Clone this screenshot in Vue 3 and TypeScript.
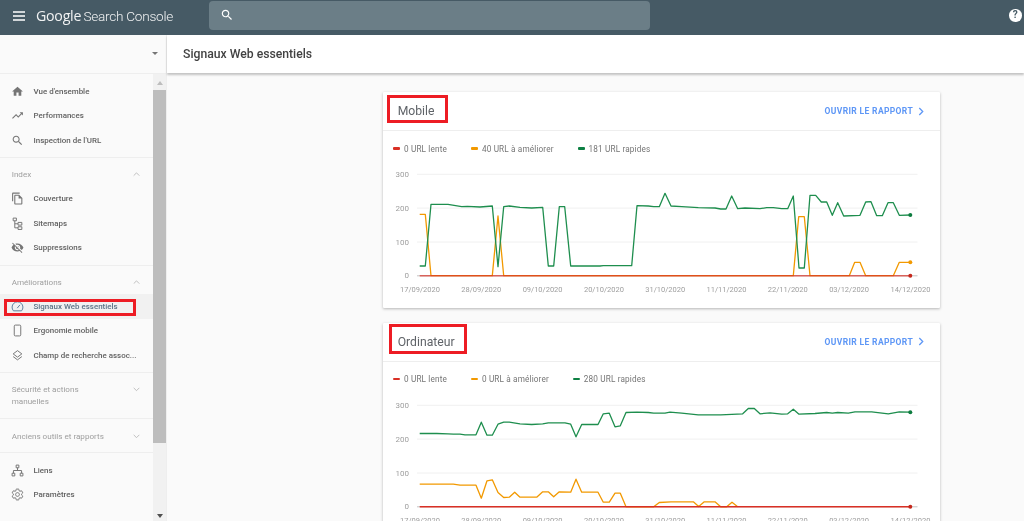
<script setup lang="ts">
type Icon = { d: string; stroke?: boolean };
type Row = { label: string; icon: Icon; active?: boolean };
type Pt = number[];

const icons: Record<string, Icon> = {
  home: { d: 'M10 20v-6h4v6h5v-8h3L12 3 2 12h3v8z' },
  trend: { d: 'M16 6l2.29 2.29-4.88 4.88-4-4L2 16.59 3.41 18l6-6 4 4 6.3-6.29L22 12V6z' },
  search: { d: 'M15.5 14h-.79l-.28-.27C15.41 12.59 16 11.11 16 9.5 16 5.91 13.09 3 9.5 3S3 5.91 3 9.5 5.91 16 9.5 16c1.61 0 3.09-.59 4.23-1.57l.27.28v.79l5 4.99L20.49 19l-4.99-5zm-6 0C7.01 14 5 11.99 5 9.5S7.01 5 9.5 5 14 7.01 14 9.5 11.99 14 9.5 14z' },
  copy: { d: 'M16 1H4c-1.1 0-2 .9-2 2v14h2V3h12V1zm-1 4H8c-1.1 0-1.99.9-1.99 2L6 21c0 1.1.89 2 1.99 2H19c1.1 0 2-.9 2-2V11l-6-6zM8 21V7h6v5h5v9H8z' },
  sitemap: { d: 'M4 2h6v5H4zM13 10h7v5h-7zM13 18h7v5h-7zM7 7v13h6M7 12.5h6', stroke: true },
  eyeOff: { d: 'M12 7c2.76 0 5 2.24 5 5 0 .65-.13 1.26-.36 1.83l2.92 2.92c1.51-1.26 2.7-2.89 3.43-4.75-1.73-4.39-6-7.5-11-7.5-1.4 0-2.74.25-3.98.7l2.16 2.16C10.74 7.13 11.35 7 12 7zM2 4.27l2.28 2.28.46.46C3.08 8.3 1.78 10.02 1 12c1.73 4.39 6 7.5 11 7.5 1.55 0 3.03-.3 4.38-.84l.42.42L19.73 22 21 20.73 3.27 3 2 4.27zM7.53 9.8l1.55 1.55c-.05.21-.08.43-.08.65 0 1.66 1.34 3 3 3 .22 0 .44-.03.65-.08l1.55 1.55c-.67.33-1.41.53-2.2.53-2.76 0-5-2.24-5-5 0-.79.2-1.53.53-2.2zm4.31-.78l3.15 3.15.02-.16c0-1.66-1.34-3-3-3l-.17.01z' },
  gauge: { d: 'M4.5 20a10 10 0 1 1 15 0zM11.5 15l5-6', stroke: true },
  phone: { d: 'M8 2h8a2 2 0 0 1 2 2v16a2 2 0 0 1-2 2H8a2 2 0 0 1-2-2V4a2 2 0 0 1 2-2z', stroke: true },
  layers: { d: 'M12 3l8 6-8 6-8-6zM4 14l8 6 8-6', stroke: true },
  network: { d: 'M9.5 2h5v5h-5zM2 17h5v5H2zM17 17h5v5h-5zM12 7v5M4.5 17v-5h15v5', stroke: true },
  gear: { d: 'M19.43 12.98c.04-.32.07-.64.07-.98s-.03-.66-.07-.98l2.11-1.65c.19-.15.24-.42.12-.64l-2-3.46c-.12-.22-.39-.3-.61-.22l-2.49 1c-.52-.4-1.08-.73-1.69-.98l-.38-2.65C14.46 2.18 14.25 2 14 2h-4c-.25 0-.46.18-.49.42l-.38 2.65c-.61.25-1.17.59-1.69.98l-2.49-1c-.23-.09-.49 0-.61.22l-2 3.46c-.13.22-.07.49.12.64l2.11 1.65c-.04.32-.07.65-.07.98s.03.66.07.98l-2.11 1.65c-.19.15-.24.42-.12.64l2 3.46c.12.22.39.3.61.22l2.49-1c.52.4 1.08.73 1.69.98l.38 2.65c.03.24.24.42.49.42h4c.25 0 .46-.18.49-.42l.38-2.65c.61-.25 1.17-.59 1.69-.98l2.49 1c.23.09.49 0 .61-.22l2-3.46c.12-.22.07-.49-.12-.64l-2.11-1.65zM12 15.5c-1.93 0-3.5-1.57-3.5-3.5s1.57-3.5 3.5-3.5 3.5 1.57 3.5 3.5-1.57 3.5-3.5 3.5z', stroke: true },
};

const overview: Row[] = [
  { label: "Vue d'ensemble", icon: icons.home },
  { label: 'Performances', icon: icons.trend },
  { label: "Inspection de l'URL", icon: icons.search },
];
const indexRows: Row[] = [
  { label: 'Couverture', icon: icons.copy },
  { label: 'Sitemaps', icon: icons.sitemap },
  { label: 'Suppressions', icon: icons.eyeOff },
];
const improveRows: Row[] = [
  { label: 'Signaux Web essentiels', icon: icons.gauge, active: true },
  { label: 'Ergonomie mobile', icon: icons.phone },
  { label: 'Champ de recherche assoc...', icon: icons.layers },
];
const footerRows: Row[] = [
  { label: 'Liens', icon: icons.network },
  { label: 'Paramètres', icon: icons.gear },
];
const groups = [
  { title: 'Index', open: true, rows: indexRows },
  { title: 'Améliorations', open: true, rows: improveRows },
];

const dates = ['17/09/2020', '28/09/2020', '09/10/2020', '20/10/2020', '31/10/2020', '11/11/2020', '22/11/2020', '03/12/2020', '14/12/2020'];
const ticks = [
  { label: '300', y: 9.3 },
  { label: '200', y: 43.1 },
  { label: '100', y: 77 },
  { label: '0', y: 110.8 },
];
const dateX = (i: number) => 37 + i * 61.3;

// Traced points: the first list runs over the left half of the chart, the second over the right half.
function line(left: Pt[], right: Pt[], originY: number): string {
  const a = left.map(([x, y]) => `${(x / 3 - 3).toFixed(1)},${(y / 3 + originY).toFixed(1)}`);
  const b = right.map(([x, y]) => `${(x / 3 + 277).toFixed(1)},${(y / 3 + originY).toFixed(1)}`);
  return [...a, ...b].join(' ');
}

const mobileOrigin = -75;
const desktopOrigin = -85.5;

const cards = [
  {
    title: 'Mobile',
    legend: [
      { text: '0 URL lente', cls: 'red' },
      { text: '40 URL à améliorer', cls: 'orange' },
      { text: '181 URL rapides', cls: 'green' },
    ],
    red: line([[119, 557]], [[751, 557]], mobileOrigin),
    orange: line(
      [[119, 373], [136, 373], [153, 557], [337, 557], [354, 378], [371, 557]],
      [[400, 557], [416, 380], [433, 380], [450, 557], [568, 557], [584, 517], [600, 517], [617, 557], [700, 557], [718, 517], [751, 517]],
      mobileOrigin,
    ),
    green: line(
      [[119, 528], [136, 528], [153, 343], [204, 343], [245, 350], [262, 349], [300, 351], [337, 348], [354, 530], [371, 350], [388, 348], [420, 352], [455, 354], [488, 352], [505, 528], [521, 528], [538, 350], [554, 350], [572, 528], [660, 528], [670, 527], [755, 527], [771, 347], [805, 348], [821, 350], [838, 350], [855, 310]],
      [[33, 348], [65, 350], [115, 353], [165, 354], [182, 357], [198, 357], [215, 318], [233, 356], [255, 354], [300, 356], [320, 353], [340, 353], [365, 356], [383, 356], [400, 318], [417, 534], [433, 534], [450, 316], [467, 316], [484, 336], [500, 336], [517, 376], [533, 338], [551, 378], [600, 376], [617, 336], [633, 335], [650, 377], [667, 377], [684, 338], [700, 338], [718, 376], [751, 375]],
      mobileOrigin,
    ),
    dots: { green: 375, orange: 517, red: 557 },
    origin: mobileOrigin,
    redOpacity: 0.7,
  },
  {
    title: 'Ordinateur',
    legend: [
      { text: '0 URL lente', cls: 'red' },
      { text: '0 URL à améliorer', cls: 'orange' },
      { text: '280 URL rapides', cls: 'green' },
    ],
    red: line([[119, 589]], [[751, 589]], desktopOrigin),
    orange: line(
      [[119, 521], [220, 521], [240, 524], [288, 524], [304, 563], [321, 511], [337, 508], [354, 546], [371, 561], [388, 560], [404, 545], [420, 560], [470, 560], [488, 544], [505, 544], [521, 559], [538, 544], [572, 545], [588, 506], [605, 545], [654, 545], [670, 575], [688, 575], [705, 548], [721, 548], [738, 589], [821, 589], [838, 576]],
      [[33, 574], [100, 574], [116, 588], [133, 574], [165, 574], [182, 589], [200, 589], [216, 575], [233, 589]],
      desktopOrigin,
    ),
    green: line(
      [[119, 369], [170, 369], [204, 370], [220, 371], [240, 371], [255, 373], [288, 373], [304, 335], [321, 374], [337, 374], [354, 341], [371, 335], [388, 335], [420, 340], [455, 342], [488, 340], [505, 337], [555, 337], [572, 341], [588, 379], [605, 342], [654, 342], [670, 310], [688, 308], [705, 349], [721, 346], [738, 306], [771, 305], [805, 306], [821, 308], [855, 308]],
      [[30, 305], [65, 308], [115, 313], [182, 313], [248, 310], [265, 294], [283, 294], [300, 310], [330, 307], [365, 311], [383, 310], [400, 296], [417, 311], [465, 309], [500, 306], [517, 308], [533, 306], [565, 308], [585, 304], [635, 304], [685, 310], [718, 304], [751, 305]],
      desktopOrigin,
    ),
    dots: { green: 305, orange: null, red: 589 },
    origin: desktopOrigin,
    redOpacity: 1,
  },
];
</script>

<template>
  <div class="app">
    <header class="topbar">
      <svg class="burger" viewBox="0 0 12 10"><path d="M0 1h12M0 5h12M0 9h12" /></svg>
      <div class="logo"><span class="logo-g">Google</span> <span class="logo-s">Search Console</span></div>
      <div class="searchbox">
        <svg class="searchicon" viewBox="0 0 24 24"><path :d="icons.search.d" /></svg>
      </div>
      <div class="help">?</div>
    </header>

    <div class="body">
      <aside class="sidebar">
        <div class="property"><span class="caret"></span></div>
        <div class="nav-wrap">
          <nav class="nav">
            <div class="group plain">
              <div v-for="r in overview" :key="r.label" class="row">
                <svg class="icon" :class="{ outline: r.icon.stroke }" viewBox="0 0 24 24"><path :d="r.icon.d" /></svg>
                <span>{{ r.label }}</span>
              </div>
            </div>
            <div v-for="g in groups" :key="g.title" class="group">
              <div class="head">
                <span>{{ g.title }}</span>
                <svg class="chev" viewBox="0 0 10 6"><path d="M1 5l4-4 4 4" /></svg>
              </div>
              <div v-for="r in g.rows" :key="r.label" class="row" :class="{ active: r.active }">
                <svg class="icon" :class="{ outline: r.icon.stroke }" viewBox="0 0 24 24"><path :d="r.icon.d" /></svg>
                <span>{{ r.label }}</span>
                <i v-if="r.active" class="mark mark-side"></i>
              </div>
            </div>
            <div class="group tall">
              <div class="head multi">
                <span>Sécurité et actions manuelles</span>
                <svg class="chev" viewBox="0 0 10 6"><path d="M1 1l4 4 4-4" /></svg>
              </div>
            </div>
            <div class="group single">
              <div class="head">
                <span>Anciens outils et rapports</span>
                <svg class="chev" viewBox="0 0 10 6"><path d="M1 1l4 4 4-4" /></svg>
              </div>
            </div>
            <div class="group plain last">
              <div v-for="r in footerRows" :key="r.label" class="row">
                <svg class="icon" :class="{ outline: r.icon.stroke }" viewBox="0 0 24 24"><path :d="r.icon.d" /></svg>
                <span>{{ r.label }}</span>
              </div>
            </div>
          </nav>
          <div class="scroll">
            <span class="arrow up"></span>
            <span class="thumb"></span>
            <span class="arrow down"></span>
          </div>
        </div>
      </aside>

      <main class="main">
        <div class="pagehead">Signaux Web essentiels</div>
        <div class="content">
          <section v-for="c in cards" :key="c.title" class="card">
            <div class="cardhead">
              <h2>{{ c.title }}</h2>
              <i class="mark" :class="c.title === 'Mobile' ? 'mark-mobile' : 'mark-desktop'"></i>
              <a class="open">OUVRIR LE RAPPORT
                <svg viewBox="0 0 7 10"><path d="M1.5 1l4 4-4 4" /></svg>
              </a>
            </div>
            <div class="legend">
              <span v-for="l in c.legend" :key="l.text" class="lg">
                <i :class="l.cls"></i>{{ l.text }}
              </span>
            </div>
            <svg class="chart" viewBox="0 0 556 143">
              <g v-for="t in ticks" :key="t.label">
                <line class="grid" :class="{ base: t.label === '0' }" x1="34" x2="534.5" :y1="t.y" :y2="t.y" />
                <text class="tick" x="26" :y="t.y + 2.6" text-anchor="end">{{ t.label }}</text>
              </g>
              <text v-for="(d, i) in dates" :key="d" class="tick date" :x="dateX(i)" y="126.5" text-anchor="middle">{{ d }}</text>
              <polyline class="ln" stroke="#f29900" :points="c.orange" />
              <polyline class="ln" stroke="#1e8e4e" :points="c.green" />
              <polyline class="ln zero" stroke="#d93025" :stroke-opacity="c.redOpacity" :points="c.red" />
              <circle cx="527.3" :cy="c.dots.green / 3 + c.origin" r="2" fill="#0d7c3f" />
              <circle v-if="c.dots.orange" cx="527.3" :cy="c.dots.orange / 3 + c.origin" r="2" fill="#f29900" />
              <circle cx="527.3" :cy="c.dots.red / 3 + c.origin" r="2" fill="#c5281c" />
            </svg>
          </section>
        </div>
      </main>
    </div>
  </div>
</template>

<style>
html, body { margin: 0; background: #fafafa; }
</style>

<style scoped>
.app {
  width: 1024px;
  height: 521px;
  overflow: hidden;
  display: flex;
  flex-direction: column;
  font-family: Roboto, "Liberation Sans", sans-serif;
  background: #fafafa;
  filter: blur(.3px);
}
.topbar {
  height: 34.5px;
  flex: none;
  background: #465a65;
  display: flex;
  align-items: center;
  color: #fff;
  padding: 0 2.5px 0 13px;
  box-sizing: border-box;
}
.burger { width: 12px; height: 10px; fill: none; stroke: #fff; stroke-width: 1.3; margin-bottom: 3px; }
.logo { margin-left: 11px; width: 173px; font-size: 14.2px; white-space: nowrap; opacity: .92; letter-spacing: -.25px; margin-bottom: 3px; }
.logo-g { font-family: "Open Sans", sans-serif; font-weight: 400; }
.logo-s { font-weight: 300; font-size: 13.6px; margin-left: -1px; }
.searchbox {
  width: 441px;
  height: 29px;
  margin: 0 0 4px 0;
  background: #6b7e87;
  border-radius: 4px;
  display: flex;
  align-items: center;
  padding-left: 11px;
  box-sizing: border-box;
}
.searchicon { width: 14px; height: 14px; fill: #fff; }
.help {
  margin-left: auto;
  margin-bottom: 4px;
  width: 12.5px;
  height: 12.5px;
  border-radius: 50%;
  background: #fff;
  color: #465a65;
  font-size: 10px;
  font-weight: 700;
  line-height: 12.5px;
  text-align: center;
}
.body { flex: 1; min-height: 0; display: flex; }
.sidebar { width: 167px; flex: none; display: flex; flex-direction: column; border-right: 1px solid #eeeeee; box-sizing: border-box; }
.property {
  height: 39px;
  flex: none;
  border-bottom: 1px solid #eeeeee;
  box-sizing: border-box;
  display: flex;
  align-items: center;
  justify-content: flex-end;
  padding-right: 8.5px;
}
.caret { border: 3px solid transparent; border-top: 3px solid #757575; border-bottom: 0; }
.nav-wrap { flex: 1; min-height: 0; display: flex; }
.nav { flex: 1; min-width: 0; }
.scroll { width: 13px; flex: none; background: #f1f1f1; display: flex; flex-direction: column; align-items: center; }
.thumb { width: 13px; height: 353px; background: #bdbdbd; margin-top: 5px; }
.arrow { border: 3.5px solid transparent; }
.arrow.up { border-bottom: 4px solid #bdbdbd; border-top: 0; margin-top: 7px; }
.arrow.down { border-top: 4px solid #505050; border-bottom: 0; margin-top: auto; margin-bottom: 3px; }
.group { padding: 4px 0 4.5px; border-bottom: 1px solid #eeeeee; }
.group.plain { padding-top: 5.7px; }
.group.tall { padding: 10px 0 11px; }
.group.single { padding: 1.5px 0 0; height: 33.6px; box-sizing: border-box; display: flex; align-items: center; }
.group.single .head { flex: 1; }
.group.last { border-bottom: 0; padding-top: 5.2px; }
.row {
  position: relative;
  height: 24.5px;
  display: flex;
  align-items: center;
  padding-left: 11px;
  font-size: 7.95px;
  font-weight: 500;
  color: #616161;
  white-space: nowrap;
}
.row.active { background: #f1f1f1; color: #5b7386; }
.row.active .icon { stroke: #5b7f9c; }
.icon { width: 13px; height: 13px; flex: none; margin-right: 9.5px; fill: #757575; }
.icon.outline { fill: none; stroke: #757575; stroke-width: 1.8; }
.head {
  height: 24.5px;
  display: flex;
  align-items: center;
  justify-content: space-between;
  padding: 0 13px 0 11.7px;
  font-size: 8.1px;
  color: #9e9e9e;
}
.head.multi { height: 24px; line-height: 12px; align-items: flex-start; }
.head.multi span { width: 90px; }
.head.multi .chev { margin-top: 4px; }
.chev { width: 7px; height: 4.5px; fill: none; stroke: #a8a8a8; stroke-width: 1; flex: none; }
.main { flex: 1; min-width: 0; display: flex; flex-direction: column; }
.pagehead {
  height: 38.5px;
  flex: none;
  box-sizing: border-box;
  background: #fff;
  box-shadow: 0 2px 2px rgba(0, 0, 0, .22);
  display: flex;
  align-items: center;
  padding-left: 16px;
  font-size: 12.2px;
  font-weight: 500;
  color: #424242;
  position: relative;
}
.content { padding: 19px 0 0 216px; }
.card {
  width: 556.5px;
  height: 216px;
  margin-bottom: 14.5px;
  background: #fff;
  box-shadow: 0 1px 3px rgba(0, 0, 0, .28);
  border-radius: 1px;
}
.cardhead {
  position: relative;
  height: 39px;
  box-sizing: border-box;
  border-bottom: 1px solid #eeeeee;
  display: flex;
  align-items: center;
  justify-content: space-between;
  padding: 0 15.5px 0 14.7px;
}
h2 { margin: 0; font-size: 12.2px; font-weight: 400; color: #5f6368; }
.open {
  color: #5e97f6;
  font-size: 8.5px;
  font-weight: 700;
  letter-spacing: .35px;
  display: flex;
  align-items: center;
  gap: 5px;
}
.open svg { width: 6px; height: 9px; fill: none; stroke: #5e97f6; stroke-width: 1.5; }
.legend {
  height: 34px;
  display: flex;
  align-items: center;
  gap: 24px;
  padding: 1px 0 0 10px;
  box-sizing: border-box;
  font-size: 8.2px;
  color: #757575;
  letter-spacing: .15px;
}
.lg { display: flex; align-items: center; }
.lg i { width: 7px; height: 2.5px; margin-right: 4px; border-radius: 1px; }
.red { background: #d93025; }
.orange { background: #f29900; }
.green { background: #0d8043; }
.chart { display: block; width: 556px; height: 143px; }
.grid { stroke: #f0f0f0; stroke-width: 1; }
.grid.base { stroke: #c4c4c4; }
.tick { font-size: 8px; fill: #9e9e9e; font-family: Roboto, "Liberation Sans", sans-serif; }
.date { font-size: 7.5px; }
.ln { fill: none; stroke-width: 1.3; stroke-linejoin: round; }
.zero { stroke-width: 1.5; }
.mark { position: absolute; border: 3px solid #ed1c24; box-sizing: border-box; pointer-events: none; }
.mark-side { left: 4.3px; top: 5px; width: 131.5px; height: 16.5px; }
.mark-mobile { left: 4px; top: 3px; width: 61px; height: 27.5px; }
.mark-desktop { left: 6px; top: 1px; width: 78px; height: 30.5px; }
</style>
